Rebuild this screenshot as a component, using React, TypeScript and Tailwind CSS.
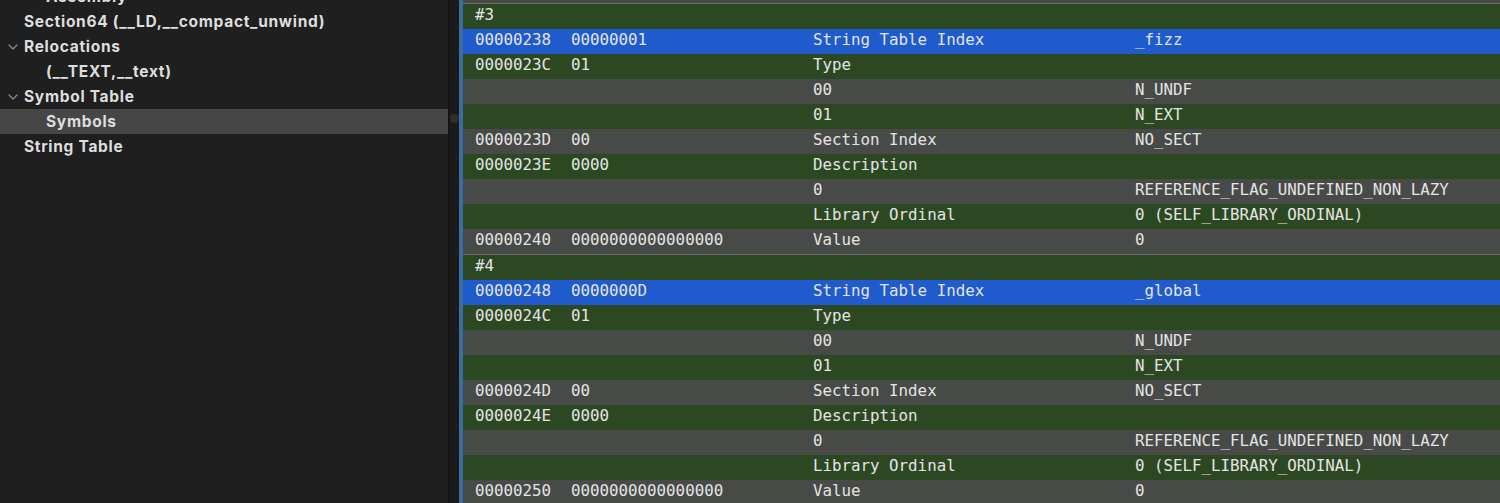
import React from "react";

type TreeItem = { label: string; level: number; chevron?: boolean; selected?: boolean };

const tree: TreeItem[] = [
  { label: "Assembly", level: 2 },
  { label: "Section64 (__LD,__compact_unwind)", level: 1 },
  { label: "Relocations", level: 1, chevron: true },
  { label: "(__TEXT,__text)", level: 2 },
  { label: "Symbol Table", level: 1, chevron: true },
  { label: "Symbols", level: 2, selected: true },
  { label: "String Table", level: 1 },
];

type Row = [string, string, string, string];

function symbolRows(hdr: string, base: string[], data: string, name: string): Row[] {
  return [
    [hdr, "", "", ""],
    [base[0], data, "String Table Index", name],
    [base[1], "01", "Type", ""],
    ["", "", "00", "N_UNDF"],
    ["", "", "01", "N_EXT"],
    [base[2], "00", "Section Index", "NO_SECT"],
    [base[3], "0000", "Description", ""],
    ["", "", "0", "REFERENCE_FLAG_UNDEFINED_NON_LAZY"],
    ["", "", "Library Ordinal", "0 (SELF_LIBRARY_ORDINAL)"],
    [base[4], "0000000000000000", "Value", "0"],
  ];
}

const sections: Row[][] = [
  symbolRows("#3", ["00000238", "0000023C", "0000023D", "0000023E", "00000240"], "00000001", "_fizz"),
  symbolRows("#4", ["00000248", "0000024C", "0000024D", "0000024E", "00000250"], "0000000D", "_global"),
];

function Chevron() {
  return (
    <svg width="10" height="6" viewBox="0 0 10 6" className="text-[#8a8a8a]">
      <path d="M1 1 L5 5 L9 1" fill="none" stroke="currentColor" strokeWidth="1.3" strokeLinecap="round" strokeLinejoin="round" />
    </svg>
  );
}

function Sidebar() {
  return (
    <aside className="w-[448px] shrink-0 bg-[#1f1f1f] overflow-hidden">
      <div className="-mt-[16px]">
        {tree.map((item) => (
          <div
            key={item.label}
            className={`h-[25px] flex items-center pt-[1px] ${item.selected ? "bg-[#464646]" : ""}`}
          >
            <div className="w-[24px] shrink-0 flex justify-center pl-[2px]">
              {item.chevron && <Chevron />}
            </div>
            <span
              className={`text-[15.5px] font-bold text-[#dedede] tracking-[0.7px] whitespace-pre ${item.level === 2 ? "pl-[22px]" : ""}`}
              style={{ fontFamily: "Inter, 'Liberation Sans', sans-serif" }}
            >
              {item.label}
            </span>
          </div>
        ))}
      </div>
    </aside>
  );
}

function Splitter() {
  return (
    <div className="w-[11px] shrink-0 bg-[#1b1b1b] border-l border-[#111] flex flex-col items-center pt-[114px]">
      <div className="w-[9px] h-[9px] rounded-full bg-[#2f2f2f]" />
    </div>
  );
}

function DataRow({ row, idx }: { row: Row; idx: number }) {
  const bg = idx === 1 ? "bg-[#1f5bcd]" : idx % 2 === 0 ? "bg-[#2c4823]" : "bg-[#474a47]";
  return (
    <div className={`h-[25px] flex items-center pl-[12px] pb-[4px] text-[#e4e4e4] ${bg}`}>
      <span className="w-[96px] shrink-0 whitespace-pre">{row[0]}</span>
      <span className="w-[242px] shrink-0 whitespace-pre">{row[1]}</span>
      <span className="w-[322px] shrink-0 whitespace-pre">{row[2]}</span>
      <span className="whitespace-pre">{row[3]}</span>
    </div>
  );
}

export default function App() {
  return (
    <div className="w-[1500px] h-[503px] flex overflow-hidden bg-[#1f1f1f]">
      <Sidebar />
      <Splitter />
      <div className="w-[4px] shrink-0 bg-[#3b6da4]" />
      <main
        className="flex-1 overflow-hidden text-[15.8px] leading-none"
        style={{ fontFamily: "'DejaVu Sans Mono', 'Liberation Mono', monospace" }}
      >
        <div className="h-[3px] bg-[#474a47]" />
        <div className="h-px bg-[#6e6e6e]" />
        {sections.map((rows, s) => (
          <div key={s} className="border-b border-[#6e6e6e]">
            {rows.map((row, i) => (
              <DataRow key={i} row={row} idx={i} />
            ))}
          </div>
        ))}
      </main>
    </div>
  );
}
